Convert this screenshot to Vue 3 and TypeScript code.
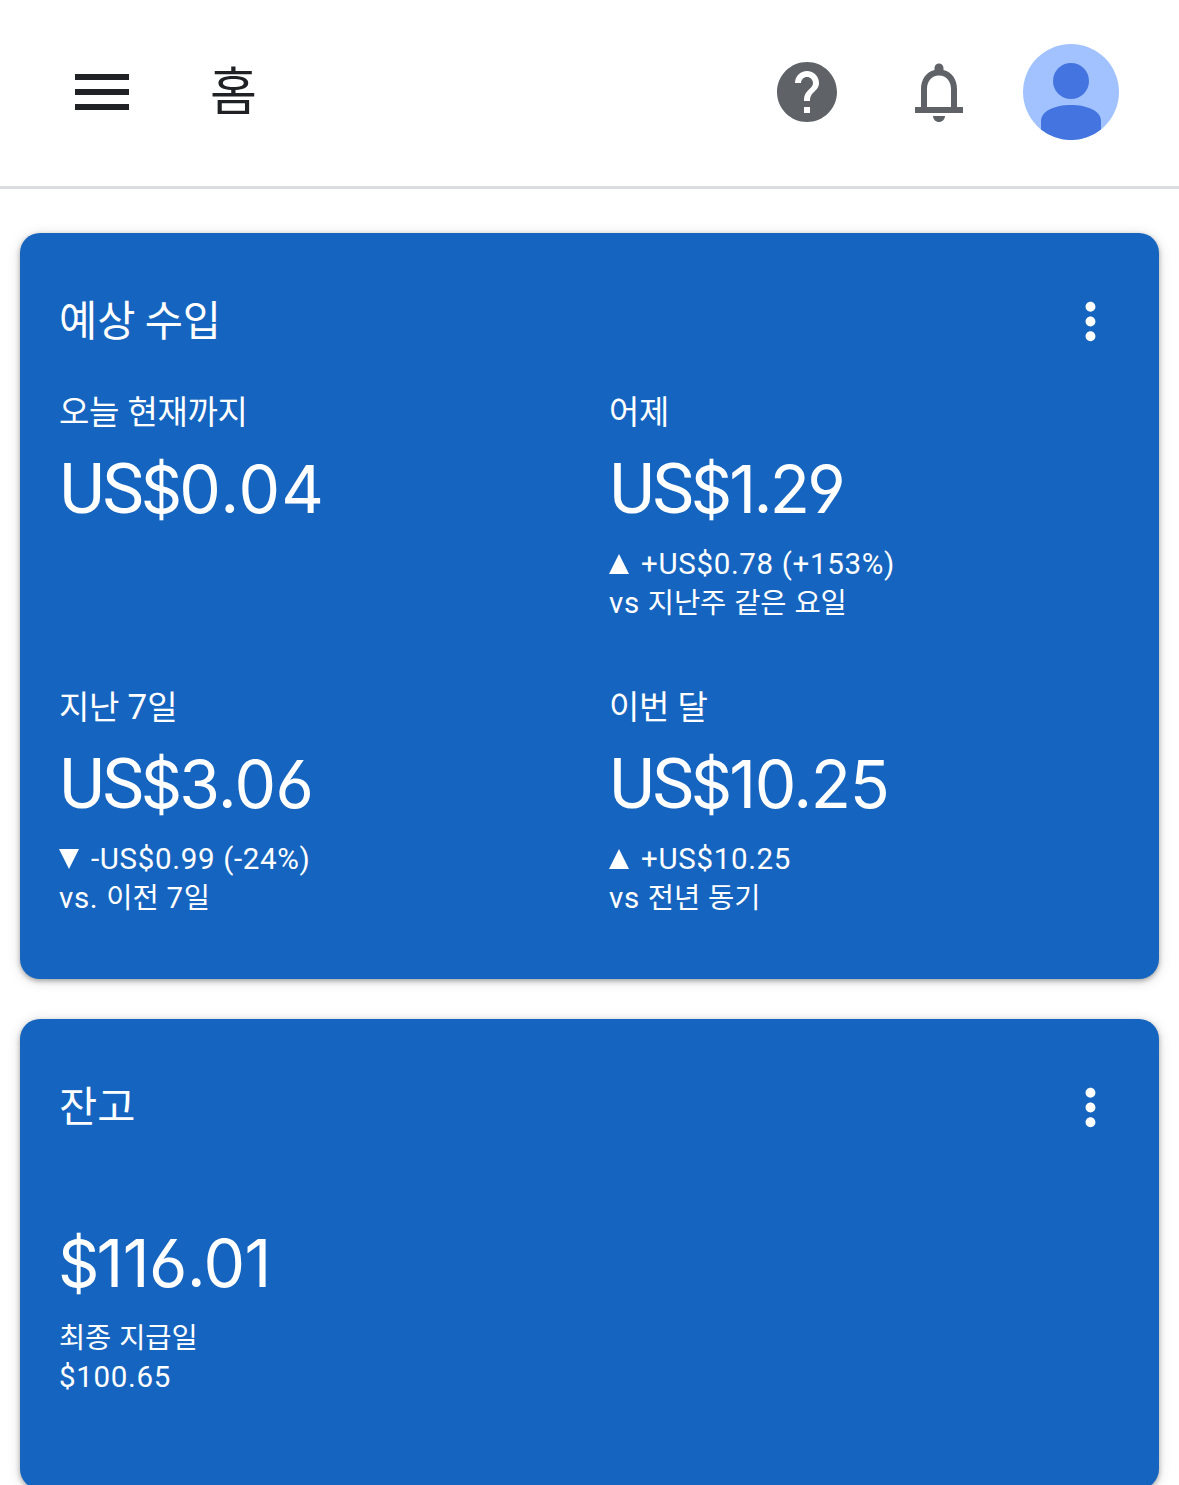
<script setup lang="ts">
interface Metric {
  label: string
  currency: string
  value: string
  trend?: 'up' | 'down'
  delta?: string
  note?: string
  spacing: number
}

const metrics: Metric[] = [
  { label: '오늘 현재까지', currency: 'US', value: '0.04', spacing: 1 },
  { label: '어제', currency: 'US', value: '1.29', trend: 'up', delta: '+US$0.78 (+153%)', note: 'vs 지난주 같은 요일', spacing: -2.7 },
  { label: '지난 7일', currency: 'US', value: '3.06', trend: 'down', delta: '-US$0.99 (-24%)', note: 'vs. 이전 7일', spacing: -0.7 },
  { label: '이번 달', currency: 'US', value: '10.25', trend: 'up', delta: '+US$10.25', note: 'vs 전년 동기', spacing: -1.4 },
]

const balance = { value: '116.01', spacing: -0.6, note: '최종 지급일', last: '$100.65' }

// Splits a string into Hangul and non-Hangul runs so each can carry its own metrics.
function runs(text: string): { text: string; ko: boolean }[] {
  return (text.match(/[가-힣]+|[^가-힣]+/g) ?? []).map((part) => ({
    text: part,
    ko: /[가-힣]/.test(part),
  }))
}
</script>

<template>
  <div class="page">
    <header class="bar">
      <svg class="icon" viewBox="0 0 24 24" fill="#202124"><path d="M3 18h18v-2H3v2zm0-5h18v-2H3v2zm0-7v2h18V6H3z" /></svg>
      <h1>홈</h1>
      <svg class="icon help" viewBox="0 0 24 24" fill="#5f6368"><path d="M12 2C6.48 2 2 6.48 2 12s4.48 10 10 10 10-4.48 10-10S17.52 2 12 2zm1 17h-2v-2h2v2zm2.07-7.75l-.9.92C13.45 12.9 13 13.5 13 15h-2v-.5c0-1.1.45-2.1 1.17-2.83l1.24-1.26c.37-.36.59-.86.59-1.41 0-1.1-.9-2-2-2s-2 .9-2 2H8c0-2.21 1.79-4 4-4s4 1.79 4 4c0 .88-.36 1.68-.93 2.25z" /></svg>
      <svg class="icon bell" viewBox="0 0 24 24" fill="#5f6368"><path d="M18 17v-6c0-3.07-1.63-5.64-4.5-6.32V4c0-.83-.67-1.5-1.5-1.5s-1.5.67-1.5 1.5v.68C7.64 5.36 6 7.92 6 11v6H4v2h16v-2h-2zm-2 0H8v-6c0-2.48 1.51-4.5 4-4.5s4 2.02 4 4.5v6zm-4 5c1.1 0 2-.9 2-2h-4c0 1.1.89 2 2 2z" /></svg>
      <svg class="avatar" viewBox="0 0 96 96">
        <circle cx="48" cy="48" r="48" fill="#a1c2ff" />
        <circle cx="48" cy="37" r="18" fill="#4374e0" />
        <path d="M18 85.5V77C18 67 32 61 48 61S78 67 78 77V85.5A48 48 0 0 1 18 85.5Z" fill="#4374e0" />
      </svg>
    </header>

    <main>
      <section class="card earnings">
        <div class="head">
          <h2>예상 수입</h2>
          <svg class="more" viewBox="0 0 24 24" fill="#fff"><path d="M12 8c1.1 0 2-.9 2-2s-.9-2-2-2-2 .9-2 2 .9 2 2 2zm0 2c-1.1 0-2 .9-2 2s.9 2 2 2 2-.9 2-2-.9-2-2-2zm0 6c-1.1 0-2 .9-2 2s.9 2 2 2 2-.9 2-2-.9-2-2-2z" /></svg>
        </div>
        <div class="grid">
          <div v-for="m in metrics" :key="m.label" class="metric">
            <div class="label"><span v-for="(r, i) in runs(m.label)" :key="i" :class="{ ko: r.ko }">{{ r.text }}</span></div>
            <div class="value" :style="{ letterSpacing: m.spacing + 'px' }"><span class="cur">{{ m.currency }}</span><span class="dollar">$</span>{{ m.value }}</div>
            <template v-if="m.delta">
              <div class="small">
                <svg class="tri" viewBox="0 0 20 20" fill="#fff"><path :d="m.trend === 'up' ? 'M10 0L20 20H0Z' : 'M0 0H20L10 20Z'" /></svg>{{ m.delta }}
              </div>
              <div class="small"><span v-for="(r, i) in runs(m.note ?? '')" :key="i" :class="{ ko: r.ko }">{{ r.text }}</span></div>
            </template>
          </div>
        </div>
      </section>

      <section class="card balance">
        <div class="head">
          <h2>잔고</h2>
          <svg class="more" viewBox="0 0 24 24" fill="#fff"><path d="M12 8c1.1 0 2-.9 2-2s-.9-2-2-2-2 .9-2 2 .9 2 2 2zm0 2c-1.1 0-2 .9-2 2s.9 2 2 2 2-.9 2-2-.9-2-2-2zm0 6c-1.1 0-2 .9-2 2s.9 2 2 2 2-.9 2-2-.9-2-2-2z" /></svg>
        </div>
        <div class="value" :style="{ letterSpacing: balance.spacing + 'px' }"><span class="dollar">$</span>{{ balance.value }}</div>
        <div class="small"><span v-for="(r, i) in runs(balance.note)" :key="i" :class="{ ko: r.ko }">{{ r.text }}</span></div>
        <div class="small">{{ balance.last }}</div>
      </section>
    </main>
  </div>
</template>

<style>
html, body { background: #fff; overflow: hidden; }
</style>

<style scoped>
.page {
  width: 1179px;
  height: 1485px;
  overflow: hidden;
  background: #fff;
  font-family: Roboto, "Noto Sans CJK KR", sans-serif;
}
.bar {
  box-sizing: border-box;
  height: 189px;
  padding: 0 60px 2px 66px;
  border-bottom: 3px solid #dadce0;
  display: flex;
  align-items: center;
}
.icon { width: 72px; height: 72px; flex: none; }
h1 {
  margin: 0 0 9px 72px;
  font-size: 51px;
  line-height: 72px;
  font-weight: 400;
  color: #202124;
  font-family: "Noto Sans CJK KR", sans-serif;
}
.help { margin-left: auto; }
.bell { margin-left: 60px; }
.avatar { width: 96px; height: 96px; margin-left: 48px; flex: none; }
main {
  padding: 44px 20px 0;
  display: flex;
  flex-direction: column;
  gap: 40px;
}
.card {
  box-sizing: border-box;
  border-radius: 20px;
  background: #1565c0;
  color: #fff;
  padding: 58px 39px 0;
  box-shadow: 0 2px 5px rgba(0, 0, 0, .3), 0 2px 14px rgba(0, 0, 0, .14);
}
.earnings { height: 746px; }
.balance { height: 470px; }
.head {
  height: 60px;
  display: flex;
  justify-content: space-between;
  align-items: center;
}
h2 {
  margin: 0 0 7px;
  font-size: 41.5px;
  line-height: 60px;
  font-weight: 400;
  font-family: "Noto Sans CJK KR", sans-serif;
}
.more { width: 59px; height: 59px; }
.grid {
  display: grid;
  grid-template-columns: 550px 1fr;
  grid-auto-rows: 295px;
  padding-top: 36px;
}
.label {
  height: 52px;
  line-height: 52px;
  font-size: 35px;
  white-space: pre;
}
.label .ko { font-size: 33px; letter-spacing: -.4px; }
.value {
  height: 80px;
  line-height: 80px;
  margin-top: 10px;
  font-family: Inter, sans-serif;
  font-size: 66px;
  font-weight: 400;
  font-feature-settings: "cv03", "cv04";
  white-space: nowrap;
}
.cur {
  margin-left: .5px;
  font-family: Roboto, sans-serif;
  font-size: 69.5px;
  line-height: 1;
  letter-spacing: -2px;
}
.dollar {
  margin-left: -1px;
  font-size: 64.5px;
  line-height: 1;
  letter-spacing: -3px;
}
.balance .value { margin-top: 86px; }
.small {
  height: 39px;
  line-height: 39px;
  font-size: 29.5px;
  letter-spacing: .67px;
  white-space: pre;
}
.value + .small { margin-top: 16px; }
.small .ko { font-size: 28.5px; letter-spacing: -.1px; }
.tri { width: 20px; height: 20px; margin-right: 12px; }
</style>
